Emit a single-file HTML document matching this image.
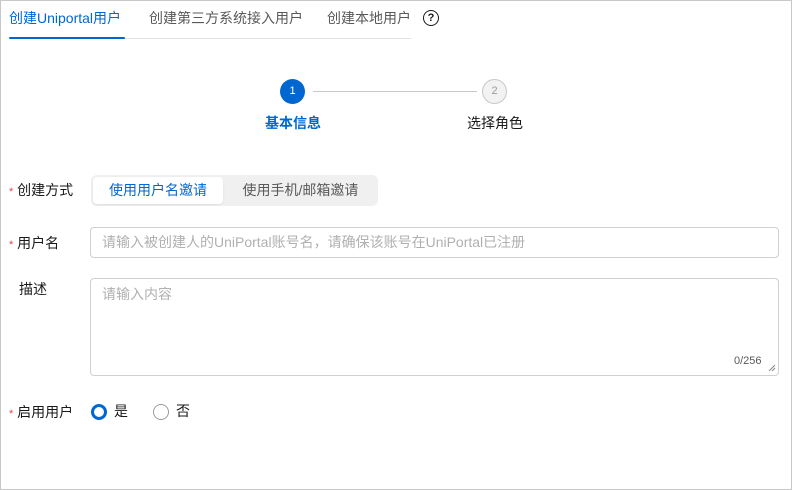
<html><head><style>
body{margin:0;width:792px;height:490px;font-family:"Liberation Sans","Noto Sans CJK SC",sans-serif;font-size:14px;color:#191919;}
.frame{position:absolute;left:0;top:0;width:790px;height:488px;border:1px solid #c8c8c8;background:#fff;}
.a{position:absolute;white-space:nowrap;line-height:18px;}
.req{color:#e54545;font-size:11px;}
</style></head><body><div class="frame">
<div class="a" style="left:8px;top:8px;color:#0067d1">创建Uniportal用户</div>
<div class="a" style="left:148px;top:8px;color:#595959">创建第三方系统接入用户</div>
<div class="a" style="left:326px;top:8px;color:#595959">创建本地用户</div>
<div class="a" style="left:422px;top:9px;width:14px;height:14px;border:1.3px solid #191919;border-radius:50%;font-size:11px;line-height:14px;text-align:center;font-weight:bold">?</div>
<div class="a" style="left:8px;top:37px;width:402px;height:1px;background:#e2e2e2"></div>
<div class="a" style="left:8px;top:36px;width:116px;height:2px;background:#0067d1;border-radius:1px"></div>

<div class="a" style="left:279px;top:78px;width:25px;height:25px;border-radius:50%;background:#0067d1;color:#fff;font-size:11px;line-height:25px;text-align:center">1</div>
<div class="a" style="left:312px;top:90px;width:164px;height:1px;background:#c8c8c8"></div>
<div class="a" style="left:481px;top:78px;width:23px;height:23px;border-radius:50%;border:1px solid #c8c8c8;background:#f2f2f2;color:#999;font-size:11px;line-height:23px;text-align:center">2</div>
<div class="a" style="left:264px;top:113px;color:#0067d1;font-weight:bold">基本信息</div>
<div class="a" style="left:466px;top:113px;color:#191919">选择角色</div>

<div class="a" style="left:8px;top:180px"><span class="req">*</span> 创建方式</div>
<div class="a" style="left:90px;top:174px;width:287px;height:31px;background:#f0f0f0;border-radius:6px"></div>
<div class="a" style="left:92px;top:176px;width:130px;height:27px;background:#fff;border-radius:4px;box-shadow:0 1px 2px rgba(0,0,0,.08);color:#0067d1;text-align:center;line-height:27px">使用用户名邀请</div>
<div class="a" style="left:222px;top:176px;width:155px;height:27px;color:#595959;text-align:center;line-height:27px">使用手机/邮箱邀请</div>

<div class="a" style="left:8px;top:233px"><span class="req">*</span> 用户名</div>
<div class="a" style="left:89px;top:226px;width:687px;height:29px;border:1px solid #d0d0d0;border-radius:4px"></div>
<div class="a" style="left:101px;top:232px;color:#b0b0b0">请输入被创建人的UniPortal账号名，请确保该账号在UniPortal已注册</div>

<div class="a" style="left:18px;top:279px">描述</div>
<div class="a" style="left:89px;top:277px;width:687px;height:96px;border:1px solid #d0d0d0;border-radius:4px"></div>
<div class="a" style="left:101px;top:284px;color:#b0b0b0">请输入内容</div>
<div class="a" style="left:733px;top:351px;font-size:11px;color:#595959">0/256</div>
<svg class="a" style="left:766px;top:362px" width="9" height="9"><path d="M8 2L2 8M8 5L5 8" stroke="#888" stroke-width="1"/></svg>

<div class="a" style="left:8px;top:402px"><span class="req">*</span> 启用用户</div>
<div class="a" style="left:90px;top:403px;width:10px;height:10px;border:3px solid #0067d1;border-radius:50%"></div>
<div class="a" style="left:113px;top:401px">是</div>
<div class="a" style="left:152px;top:403px;width:14px;height:14px;border:1px solid #999;border-radius:50%"></div>
<div class="a" style="left:175px;top:401px">否</div>
</div></body></html>
